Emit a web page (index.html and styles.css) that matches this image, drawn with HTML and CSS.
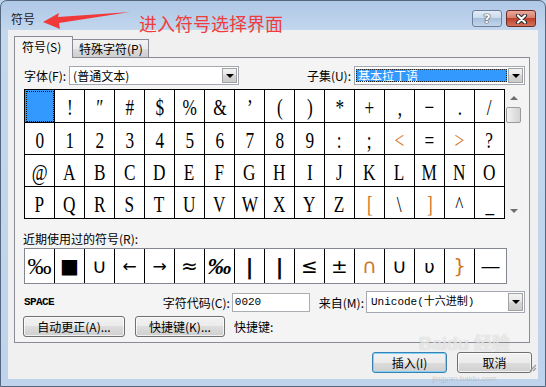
FILE: index.html
```html
<!DOCTYPE html>
<html lang="zh-CN">
<head>
    <meta charset="UTF-8">
    <title>符号</title>
    <link rel="stylesheet" href="styles.css">
</head>
<body>
    <div class="window">
        <div class="titlebar">
            <span class="title">符号</span>
            <div class="caption-buttons">
                <button class="cap help">?</button>
                <button class="cap close">
                    <svg width="13" height="10" viewBox="0 0 13 10"><path d="M3 1.5L10 8.5M10 1.5L3 8.5" stroke="#2b2b2b" stroke-width="4.2" stroke-linecap="round"/><path d="M3 1.5L10 8.5M10 1.5L3 8.5" stroke="#fff" stroke-width="2.2" stroke-linecap="round"/></svg>
                </button>
            </div>
        </div>

        <div class="client">
            <div class="tabs">
                <div class="tab active">符号(S)</div>
                <div class="tab">特殊字符(P)</div>
            </div>

            <div class="panel">
                <div class="font-row">
                    <div class="field">
                        <label>字体(F):</label>
                        <div class="combo font-combo"><span class="combo-text">(普通文本)</span><span class="combo-btn"></span></div>
                    </div>
                    <div class="field">
                        <label>子集(U):</label>
                        <div class="combo subset-combo"><span class="combo-text selected">基本拉丁语</span><span class="combo-btn"></span></div>
                    </div>
                </div>

                <div class="charmap">
                    <div class="grid">
                        <div class="cell current"></div><div class="cell"><span>!</span></div><div class="cell"><span>″</span></div><div class="cell"><span>#</span></div><div class="cell"><span>$</span></div><div class="cell"><span>%</span></div><div class="cell"><span>&amp;</span></div><div class="cell"><span>’</span></div><div class="cell"><span>(</span></div><div class="cell"><span>)</span></div><div class="cell"><span>*</span></div><div class="cell"><span>+</span></div><div class="cell"><span>,</span></div><div class="cell"><span>−</span></div><div class="cell"><span>.</span></div><div class="cell"><span>/</span></div>
                        <div class="cell"><span>0</span></div><div class="cell"><span>1</span></div><div class="cell"><span>2</span></div><div class="cell"><span>3</span></div><div class="cell"><span>4</span></div><div class="cell"><span>5</span></div><div class="cell"><span>6</span></div><div class="cell"><span>7</span></div><div class="cell"><span>8</span></div><div class="cell"><span>9</span></div><div class="cell"><span>:</span></div><div class="cell"><span>;</span></div><div class="cell tint"><span>&lt;</span></div><div class="cell"><span>=</span></div><div class="cell tint"><span>&gt;</span></div><div class="cell"><span>?</span></div>
                        <div class="cell"><span>@</span></div><div class="cell"><span>A</span></div><div class="cell"><span>B</span></div><div class="cell"><span>C</span></div><div class="cell"><span>D</span></div><div class="cell"><span>E</span></div><div class="cell"><span>F</span></div><div class="cell"><span>G</span></div><div class="cell"><span>H</span></div><div class="cell"><span>I</span></div><div class="cell"><span>J</span></div><div class="cell"><span>K</span></div><div class="cell"><span>L</span></div><div class="cell"><span>M</span></div><div class="cell"><span>N</span></div><div class="cell"><span>O</span></div>
                        <div class="cell"><span>P</span></div><div class="cell"><span>Q</span></div><div class="cell"><span>R</span></div><div class="cell"><span>S</span></div><div class="cell"><span>T</span></div><div class="cell"><span>U</span></div><div class="cell"><span>V</span></div><div class="cell"><span>W</span></div><div class="cell"><span>X</span></div><div class="cell"><span>Y</span></div><div class="cell"><span>Z</span></div><div class="cell tint"><span>[</span></div><div class="cell"><span>\</span></div><div class="cell tint"><span>]</span></div><div class="cell"><span>^</span></div><div class="cell"><span>_</span></div>
                    </div>
                    <div class="scrollbar">
                        <div class="sb-arrow up"></div>
                        <div class="sb-thumb"></div>
                        <div class="sb-track"></div>
                        <div class="sb-arrow down"></div>
                    </div>
                </div>

                <div class="recent-label">近期使用过的符号(R):</div>
                <div class="recent">
                    <div class="rc permille">‰</div>
                    <div class="rc">■</div>
                    <div class="rc">∪</div>
                    <div class="rc arrow">←</div>
                    <div class="rc arrow">→</div>
                    <div class="rc">≈</div>
                    <div class="rc permille italic">‰</div>
                    <div class="rc bar">|</div>
                    <div class="rc bar">|</div>
                    <div class="rc">≤</div>
                    <div class="rc">±</div>
                    <div class="rc tint">∩</div>
                    <div class="rc">∪</div>
                    <div class="rc upsilon">υ</div>
                    <div class="rc tint">}</div>
                    <div class="rc">—</div>
                </div>

                <div class="code-row">
                    <span class="sym-name">SPACE</span>
                    <label>字符代码(C):</label>
                    <div class="code-box">0020</div>
                    <label class="from-label">来自(M):</label>
                    <div class="combo from-combo"><span class="combo-text mono">Unicode(十六进制)</span><span class="combo-btn"></span></div>
                </div>

                <div class="button-row">
                    <button class="btn btn-autocorrect">自动更正(A)...</button>
                    <button class="btn btn-shortcut">快捷键(K)...</button>
                    <span class="shortcut-label">快捷键:</span>
                </div>
            </div>

            <div class="footer">
                <button class="btn btn-default">插入(I)</button>
                <button class="btn">取消</button>
            </div>

            <svg class="grip" width="9" height="9" viewBox="0 0 9 9"><path d="M8 2L2 8M8 5L5 8M8 8L8 8" stroke="#9a9a9a" stroke-width="1.2"/></svg>
        </div>

        <div class="annot">
            <svg width="92" height="22" viewBox="0 0 92 22"><polygon points="1,12 17,3 16,7 88,2 17,13 18,19" fill="#f03a3a"/></svg>
            <span class="annot-text">进入符号选择界面</span>
        </div>

        <div class="watermark">
            <span class="wm-logo">Baidu 经验</span>
            <span class="wm-url">jingyan.baidu.com</span>
        </div>
    </div>
</body>
</html>
```

FILE: styles.css
```css
* {
    box-sizing: border-box;
}
body {
    margin: 0;
    width: 546px;
    height: 387px;
    overflow: hidden;
    font-family: "Noto Sans CJK SC", "Liberation Sans", sans-serif;
    font-size: 12px;
    color: #000;
    background: #bcd3eb;
}
.window {
    position: relative;
    width: 546px;
    height: 387px;
    border: 1px solid #54677f;
    border-radius: 7px 7px 0 0;
    background: linear-gradient(#aec8e6, #c3d7ee 30px, #bfd4ec);
    padding: 0 7px 7px 7px;
    display: flex;
    flex-direction: column;
}
.titlebar {
    height: 29px;
    display: flex;
    align-items: flex-start;
    justify-content: space-between;
    padding: 9px 2px 0 3px;
}
.title {
    line-height: 17px;
    color: #1b1b1b;
}
.caption-buttons {
    display: flex;
    gap: 4px;
}
.cap {
    width: 30px;
    height: 17px;
    padding: 0;
    border-radius: 3px;
    display: flex;
    align-items: center;
    justify-content: center;
}
.help {
    border: 1px solid #6b7f9a;
    background: linear-gradient(#e4ecf6, #c9d9ec 50%, #a9c0dd 50%, #c2d5eb);
    color: #fff;
    font: bold 13px "DejaVu Sans", sans-serif;
    text-shadow: 0 0 1px #333, 0 0 1px #333, 0 0 1px #333;
}
.close {
    border: 1px solid #6e2b22;
    background: linear-gradient(#eaa99c, #d57a68 50%, #c0402b 50%, #d3735d);
}
.client {
    position: relative;
    flex: 1;
    background: #f0f0f0;
    padding: 6px 6px 6px 6px;
}
.tabs {
    display: flex;
    align-items: flex-end;
    height: 21px;
}
.tab {
    width: 77px;
    height: 18px;
    margin-left: -1px;
    padding-left: 6px;
    border: 1px solid #898c95;
    border-bottom: none;
    background: linear-gradient(#f3f3f3, #ebebeb 50%, #dcdcdc 50%, #cfcfcf);
    line-height: 17px;
}
.tab.active {
    width: 59px;
    height: 22px;
    margin-left: 0;
    margin-bottom: -1px;
    padding-left: 7px;
    position: relative;
    z-index: 1;
    background: #f4f4f4;
    line-height: 20px;
}
.panel {
    width: 516px;
    height: 286px;
    border: 1px solid #898c95;
    background: #f4f4f4;
    padding: 8px 4px 5px 9px;
    display: flex;
    flex-direction: column;
}
.font-row {
    height: 19px;
    display: flex;
    justify-content: space-between;
    align-items: center;
}
.field {
    display: flex;
    align-items: center;
}
.field label {
    margin-right: 3px;
}
.combo {
    height: 19px;
    border: 1px solid #a4a9b1;
    background: #fff;
    padding: 1px;
    display: flex;
}
.font-combo { width: 170px; }
.subset-combo { width: 171px; }
.combo-text {
    flex: 1;
    padding-left: 2px;
    line-height: 15px;
    white-space: nowrap;
}
.combo-text.selected {
    margin: 1px 1px 1px 0;
    background: #3399ff;
    color: #fff;
    outline: 1px dotted #222;
    outline-offset: -1px;
    line-height: 13px;
}
.combo-text.mono {
    font-family: "Liberation Mono", "Noto Sans CJK SC", monospace;
    font-size: 11px;
    padding-left: 3px;
    line-height: 18px;
}
.combo-btn {
    width: 15px;
    border: 1px solid #a2a2a2;
    background: linear-gradient(#f4f4f4, #e6e6e6 50%, #d6d6d6 50%, #cbcbcb);
    display: flex;
    align-items: center;
    justify-content: center;
}
.combo-btn::after {
    content: "";
    border-top: 4px solid #000;
    border-left: 4px solid transparent;
    border-right: 4px solid transparent;
}
.charmap {
    display: flex;
    margin-top: 4px;
    height: 130px;
}
.grid {
    display: grid;
    grid-template-columns: repeat(16, 30px);
    grid-template-rows: 33px repeat(3, 32px);
    width: 481px;
    border-left: 1px solid #000;
    border-top: 1px solid #000;
    background: #fff;
}
.cell {
    border-right: 1px solid #000;
    border-bottom: 1px solid #000;
    display: flex;
    align-items: center;
    justify-content: center;
    padding-top: 4px;
    font: 23px "Liberation Serif", "DejaVu Serif", serif;
}
.cell span {
    display: inline-block;
    transform: scaleX(0.75);
}
.cell.current {
    background: #3399ff;
    outline: 1px dotted #111;
    outline-offset: -2px;
}
.tint { color: #cf7424; }
.scrollbar {
    width: 17px;
    display: flex;
    flex-direction: column;
    background: #f3f3f3;
}
.sb-arrow {
    height: 18px;
    display: flex;
    align-items: center;
    justify-content: center;
}
.sb-arrow.up::after {
    content: "";
    border-bottom: 4px solid #6f6f6f;
    border-left: 4px solid transparent;
    border-right: 4px solid transparent;
}
.sb-arrow.down {
    height: 16px;
}
.sb-arrow.down::after {
    content: "";
    border-top: 4px solid #6f6f6f;
    border-left: 4px solid transparent;
    border-right: 4px solid transparent;
}
.sb-thumb {
    height: 16px;
    margin: 0 1px;
    border: 1px solid #9b9b9b;
    border-radius: 2px;
    background: linear-gradient(to right, #f4f4f4, #e2e2e2 50%, #d4d4d4);
}
.sb-track {
    flex: 1;
}
.recent-label {
    margin: 12px 0 1px -1px;
    height: 16px;
    line-height: 16px;
}
.recent {
    display: flex;
    width: 483px;
    height: 36px;
    border: 1px solid #828790;
    background: #fff;
}
.rc {
    width: 30px;
    border-right: 1px solid #000;
    display: flex;
    align-items: center;
    justify-content: center;
    font: 20px "DejaVu Sans", sans-serif;
}
.rc:last-child {
    flex: 1;
    border-right: none;
}
.rc.permille {
    font: 24px "Liberation Serif", serif;
}
.rc.italic {
    font-style: italic;
    font-weight: bold;
}
.rc.arrow {
    font-size: 17px;
}
.rc.bar {
    font-size: 22px;
    font-weight: bold;
}
.rc.upsilon {
    font-size: 18px;
}
.code-row {
    display: flex;
    align-items: center;
    height: 22px;
    margin-top: 7px;
}
.sym-name {
    flex: 1;
    font: bold 11px "Liberation Mono", monospace;
    letter-spacing: -0.6px;
}
.code-box {
    width: 78px;
    height: 19px;
    margin-left: 2px;
    border: 1px solid #abadb3;
    background: #fff;
    padding-left: 2px;
    font: 11px "Liberation Mono", monospace;
    line-height: 17px;
}
.from-label {
    margin: 0 2px 0 9px;
}
.from-combo {
    width: 159px;
    height: 22px;
}
.button-row {
    display: flex;
    align-items: center;
    height: 21px;
    margin-top: 3px;
}
.btn {
    height: 21px;
    width: 75px;
    padding: 0;
    border: 1px solid #707070;
    border-radius: 3px;
    background: linear-gradient(#f2f2f2, #ebebeb 50%, #dddddd 50%, #cfcfcf);
    box-shadow: inset 0 0 0 1px rgba(255, 255, 255, 0.7);
    font-family: "Noto Sans CJK SC", sans-serif;
    font-size: 12px;
    color: #000;
}
.btn-autocorrect {
    width: 102px;
    margin-left: -1px;
}
.btn-shortcut {
    width: 90px;
    margin-left: 10px;
}
.shortcut-label {
    margin-left: 9px;
}
.footer {
    display: flex;
    justify-content: flex-end;
    gap: 10px;
    margin-top: 9px;
}
.btn-default {
    border-color: #3c7fb1;
    box-shadow: inset 0 0 0 1px #7fd3f7;
}
.grip {
    position: absolute;
    right: 1px;
    bottom: 7px;
}
.annot {
    position: absolute;
    left: 41px;
    top: 9px;
    display: flex;
    align-items: flex-start;
}
.annot-text {
    margin: 2px 0 0 5px;
    font-size: 18px;
    line-height: 22px;
    color: #f03c3c;
}
.watermark {
    position: absolute;
    left: 418px;
    top: 334px;
    display: flex;
    flex-direction: column;
    align-items: center;
    pointer-events: none;
}
.wm-logo {
    font: bold 18px "Liberation Sans", "Noto Sans CJK SC", sans-serif;
    line-height: 18px;
    color: rgba(255, 255, 255, 0.6);
    text-shadow: 0 0 1px rgba(120, 120, 120, 0.4);
}
.wm-url {
    margin-top: 21px;
    font: 8px "Liberation Sans", sans-serif;
    line-height: 9px;
    color: rgba(150, 150, 150, 0.4);
}
```
